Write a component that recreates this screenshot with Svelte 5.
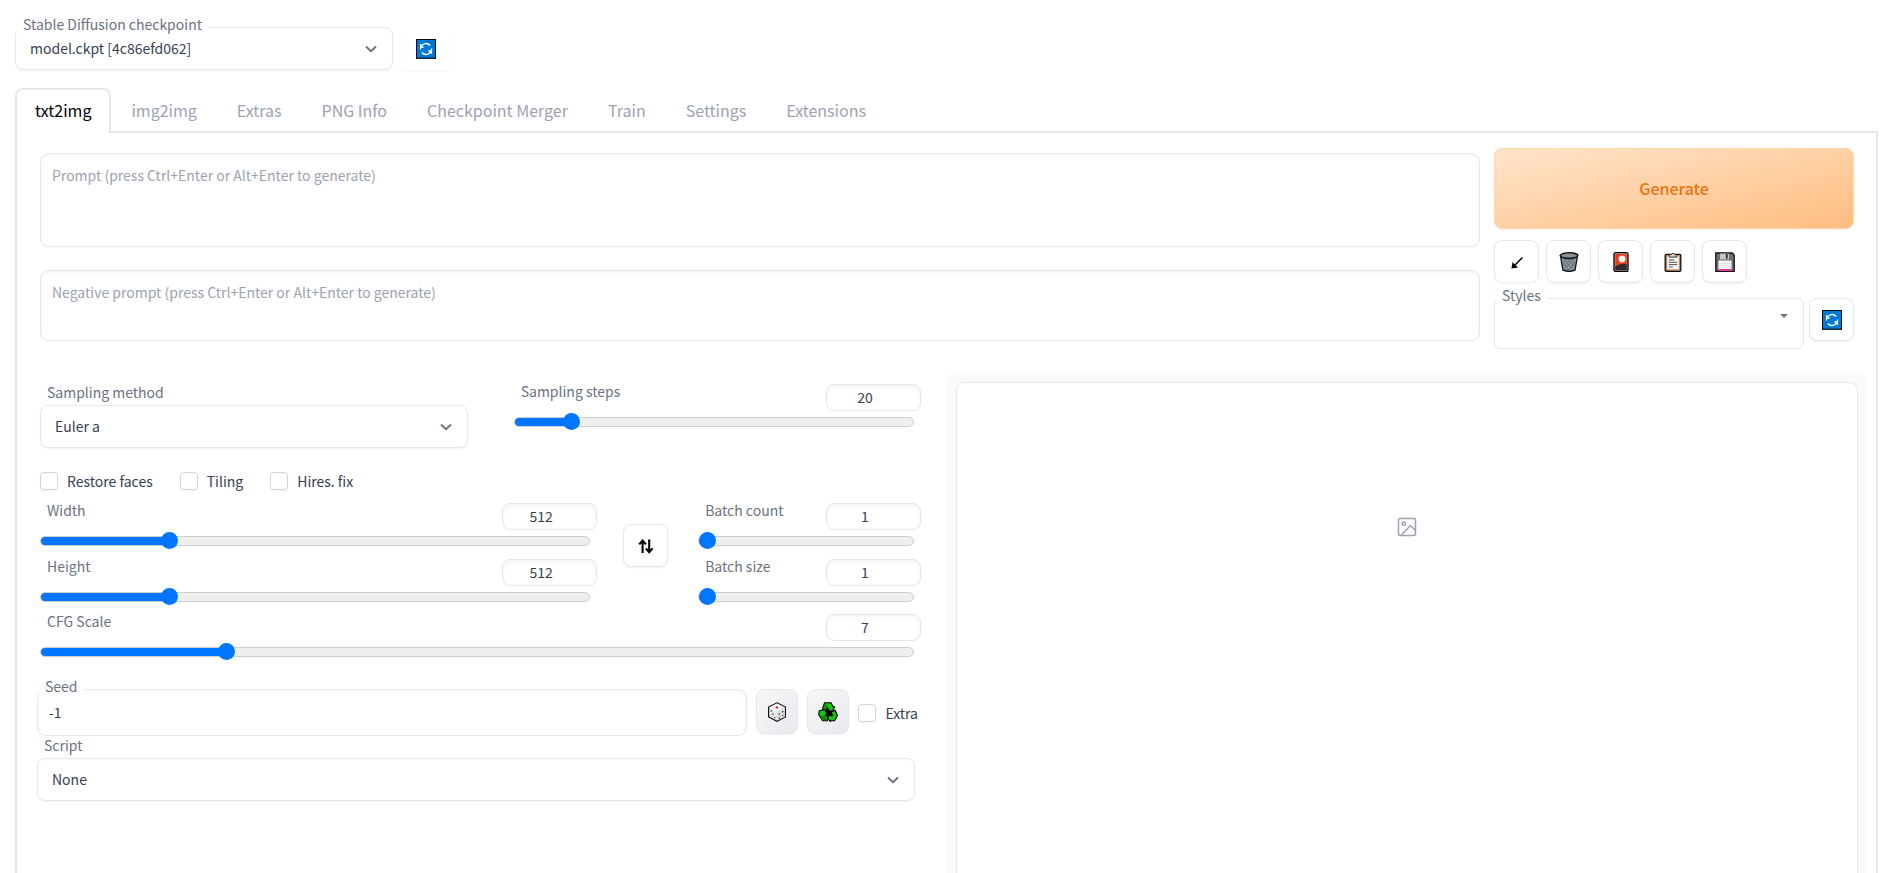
<script lang="ts">
	const tabs = [
		'txt2img',
		'img2img',
		'Extras',
		'PNG Info',
		'Checkpoint Merger',
		'Train',
		'Settings',
		'Extensions'
	];

	const tools = [
		{ icon: 'arrow', title: 'Read generation parameters' },
		{ icon: 'trash', title: 'Clear prompt' },
		{ icon: 'card', title: 'Show extra networks' },
		{ icon: 'clipboard', title: 'Apply selected styles' },
		{ icon: 'floppy', title: 'Save style' }
	];

	let activeTab = $state('txt2img');

	let sliders = $state({
		steps: { label: 'Sampling steps', min: 1, max: 150, value: 20 },
		width: { label: 'Width', min: 64, max: 2048, value: 512 },
		height: { label: 'Height', min: 64, max: 2048, value: 512 },
		count: { label: 'Batch count', min: 1, max: 100, value: 1 },
		size: { label: 'Batch size', min: 1, max: 8, value: 1 },
		cfg: { label: 'CFG Scale', min: 1, max: 30, value: 7 }
	});

	function percent(s: { min: number; max: number; value: number }) {
		return ((s.value - s.min) / (s.max - s.min)) * 100;
	}

	function swapSize() {
		const w = sliders.width.value;
		sliders.width.value = sliders.height.value;
		sliders.height.value = w;
	}
</script>

{#snippet chevron()}
	<svg class="chevron" width="14" height="14" viewBox="0 0 14 14" aria-hidden="true">
		<path d="M2 4.5 7 9.3 12 4.5" fill="none" stroke="#6b7280" stroke-width="1.9" />
	</svg>
{/snippet}

{#snippet icon(name)}
	<svg class="icon" width="20" height="20" viewBox="0 0 20 20" aria-hidden="true">
		{#if name === 'refresh'}
			<rect x="0.5" y="0.5" width="19" height="19" fill="#0078d7" stroke="#0b0b0b" />
			<path d="M1 19.2h18" stroke="#1d2f40" stroke-width="1.4" />
			<g fill="none" stroke="#fff" stroke-width="1.3">
				<path d="M4.4 10.4a5.6 5.6 0 0 1 9.8-3.9M15.6 9.6a5.6 5.6 0 0 1-9.800 3.900" />
				<path d="M4.600 5v3h3M15.400 15v-3h-3" />
			</g>
		{:else if name === 'arrow'}
			<path d="M15.500 5.500 6.200 14.800" stroke="#000" stroke-width="1.5" />
			<path d="M4.400 16.500 5.600 10 7.400 12 9 13.600 11 15.400z" fill="#000" />
		{:else if name === 'trash'}
			<path d="M1.5 4 4 18.2q6 2.4 12 0L18.5 4z" fill="#8a979e" stroke="#111" stroke-width="1.3" />
			<path
				d="m4 6 11 12M7.5 6l8.5 9M11 6l6 6M4.5 11l6 8M16 6 5 17.5M12.5 6 4.5 14M9 6 4 11M17 10l-8 9"
				stroke="#566268"
				stroke-width="0.7"
			/>
			<ellipse cx="10" cy="3.6" rx="8.9" ry="2.9" fill="#6f7d84" stroke="#111" stroke-width="1.3" />
			<ellipse cx="10" cy="3.6" rx="6.7" ry="1.4" fill="#89969c" />
		{:else if name === 'card'}
			<rect x="3" y="0.7" width="14" height="18.8" rx="1.5" fill="#b8b8b8" stroke="#000" stroke-width="1.3" />
			<rect x="4.3" y="2" width="11.4" height="16.2" fill="#f03a17" />
			<path d="M4.3 14.5q5-3.7 11.4-2.4v6.1H4.3z" fill="#2a2a2a" />
			<circle cx="11" cy="7" r="3.4" fill="#f5f5f5" />
		{:else if name === 'clipboard'}
			<rect x="2.2" y="2.3" width="15.6" height="17" rx="1" fill="#c98a57" stroke="#111" stroke-width="1.3" />
			<rect x="4.2" y="4.2" width="11.6" height="13.2" fill="#f4f4f4" />
			<path d="M6.2 2.5h2.3a1.6 1.6 0 0 1 3 0h2.3v2.6H6.2z" fill="#d5d5d5" stroke="#222" stroke-width="0.9" />
			<path d="M5.8 8h5.5M5.8 10.3h8.4M5.8 12.6h8.4M5.8 14.9h4" stroke="#555" stroke-width="1" />
		{:else if name === 'floppy'}
			<path d="M.8 1h16.4l2 2v16.3H.8z" fill="#707070" stroke="#111" stroke-width="1.3" />
			<rect x="5" y="1.6" width="9" height="5.8" fill="#c9c9c9" />
			<rect x="10.8" y="2" width="1.9" height="4.6" fill="#333" />
			<rect x="3.5" y="8.5" width="13" height="10.2" fill="#f4f4f4" />
			<path d="M3.5 11.5h13M3.5 14h13" stroke="#dadada" stroke-width="0.8" />
			<rect x="3.5" y="17.2" width="13" height="1.5" fill="#e3008c" />
		{:else if name === 'swap'}
			<g fill="none" stroke="#000" stroke-width="2.1">
				<path d="M6.6 17V5M3.2 8.4 6.6 4.6 10 8.4M13.2 3.6v12M9.8 12.4l3.4 3.8 3.4-3.8" />
			</g>
		{:else if name === 'dice'}
			<path d="M10 .8 18.4 5v10L10 19.3 1.6 15V5z" fill="#e8e8ea" stroke="#111" stroke-width="1.2" />
			<path d="M10 1.6 17.6 5.4 10 9.4 2.4 5.4z" fill="#fafafa" />
			<path d="M10 9.4v9.2l7.6-3.9V5.4z" fill="#dcdce0" />
			<ellipse cx="10" cy="5.6" rx="1.5" ry="1" fill="#d6112a" />
			<g fill="#222">
				<circle cx="4.3" cy="9" r="0.7" />
				<circle cx="6" cy="12" r="0.7" />
				<circle cx="7.8" cy="15.6" r="0.7" />
				<circle cx="12.2" cy="12" r="0.7" />
				<circle cx="15.8" cy="9.8" r="0.7" />
				<circle cx="12.4" cy="16" r="0.7" />
				<circle cx="15.8" cy="13.6" r="0.7" />
			</g>
		{:else if name === 'recycle'}
			<path d="M6 5h8l3.500 8-4 5H6l-4-5z" fill="#000" />
			<g fill="#16c60c" stroke="#000" stroke-width="1.1" stroke-linejoin="round">
				<path d="M6.600.8h6.400l2 3.800 1.600.2-2 4.600-5-.8 1-1.200-1.200-1.600L7.600 9 4.400 7z" />
				<path d="M1.200 8.800 7 7.600 9.400 12.800 7.800 12.600l-.4 1.200h2.200v5H4.600L.7 12.800z" />
				<path d="m13 10.200 4.200-2 2.200 5.200-2.800 5.400h-4v1L9.400 16l3.200-4 .2 1.600h2z" />
			</g>
			<path d="M5.400 6.800 8 1.400 9.600 4.800 7.400 8.200zM4.800 18.200 2.200 13.800h4.800l2 .6v3.800z" fill="#0b8a08" />
		{/if}
	</svg>
{/snippet}

{#snippet slider(key)}
	<div class="slider">
		<div class="slider-head">
			<label for="{key}-range">{sliders[key].label}</label>
			<input
				class="number"
				type="number"
				aria-label="{sliders[key].label} value"
				bind:value={sliders[key].value}
			/>
		</div>
		<input
			id="{key}-range"
			class="range"
			type="range"
			min={sliders[key].min}
			max={sliders[key].max}
			bind:value={sliders[key].value}
			style="--fill: {percent(sliders[key])}%"
		/>
	</div>
{/snippet}

{#snippet checkbox(label)}
	<label class="check"><input type="checkbox" />{label}</label>
{/snippet}

<div class="app">
	<header class="quicksettings">
		<div class="field checkpoint">
			<label class="floating" for="checkpoint">Stable Diffusion checkpoint</label>
			<div class="select">
				<select id="checkpoint"><option>model.ckpt [4c86efd062]</option></select>
				{@render chevron()}
			</div>
		</div>
		<button class="tool bare" title="Refresh checkpoints">{@render icon('refresh')}</button>
	</header>

	<div class="tabs" role="tablist">
		{#each tabs as tab}
			<button
				role="tab"
				class:selected={activeTab === tab}
				aria-selected={activeTab === tab}
				onclick={() => (activeTab = tab)}>{tab}</button
			>
		{/each}
	</div>

	<main class="panel">
		<section class="toprow">
			<div class="prompts">
				<textarea
					class="prompt"
					aria-label="Prompt"
					placeholder="Prompt (press Ctrl+Enter or Alt+Enter to generate)"
				></textarea>
				<textarea
					class="prompt negative"
					aria-label="Negative prompt"
					placeholder="Negative prompt (press Ctrl+Enter or Alt+Enter to generate)"
				></textarea>
			</div>
			<div class="actions">
				<button class="generate">Generate</button>
				<div class="tools">
					{#each tools as tool}
						<button class="tool" title={tool.title}>{@render icon(tool.icon)}</button>
					{/each}
				</div>
				<div class="styles">
					<div class="field">
						<label class="floating" for="styles">Styles</label>
						<div class="select multi">
							<select id="styles"><option></option></select>
							<svg class="caret" width="8" height="4" viewBox="0 0 8 4" aria-hidden="true">
								<path d="M0 0h8L4 4z" fill="#6b7280" />
							</svg>
						</div>
					</div>
					<button class="tool" title="Refresh styles">{@render icon('refresh')}</button>
				</div>
			</div>
		</section>

		<div class="columns">
			<section class="settings">
				<div class="sampler">
					<div class="method">
						<label for="method">Sampling method</label>
						<div class="select">
							<select id="method"><option>Euler a</option></select>
							{@render chevron()}
						</div>
					</div>
					{@render slider('steps')}
				</div>

				<div class="checks">
					{@render checkbox('Restore faces')}
					{@render checkbox('Tiling')}
					{@render checkbox('Hires. fix')}
				</div>

				<div class="dimensions">
					<div class="stack">
						{@render slider('width')}
						{@render slider('height')}
					</div>
					<button class="tool" title="Switch width and height" onclick={swapSize}>
						{@render icon('swap')}
					</button>
					<div class="stack">
						{@render slider('count')}
						{@render slider('size')}
					</div>
				</div>
				{@render slider('cfg')}

				<div class="seed">
					<div class="field">
						<label class="floating" for="seed">Seed</label>
						<input id="seed" type="text" value="-1" />
					</div>
					<button class="tool filled" title="Random seed">{@render icon('dice')}</button>
					<button class="tool filled" title="Reuse seed">{@render icon('recycle')}</button>
					{@render checkbox('Extra')}
				</div>

				<div class="script">
					<label for="script">Script</label>
					<div class="select">
						<select id="script"><option>None</option></select>
						{@render chevron()}
					</div>
				</div>
			</section>

			<section class="results">
				<div class="gallery">
					<svg width="20" height="20" viewBox="0 0 20 20" aria-label="No images yet">
						<g fill="none" stroke="#9ca3af" stroke-width="1.5">
							<rect x="1.5" y="1.5" width="17" height="17" rx="1.5" />
							<circle cx="6.8" cy="6.8" r="1.7" />
							<path d="M4 18.5 13.5 8.5l5 5" />
						</g>
					</svg>
				</div>
			</section>
		</div>
	</main>
</div>

<style>
	:global(body) {
		margin: 0;
		background: #fff;
		overflow-x: hidden;
	}

	:global(html) {
		scrollbar-width: none;
	}

	.app {
		box-sizing: border-box;
		padding: 27px 9px 0 15px;
		color: #374151;
		font-family: 'Noto Sans CJK SC', 'Noto Sans', sans-serif;
		font-size: 14px;
		line-height: 20px;
	}

	.app :global(*) {
		box-sizing: border-box;
	}

	button,
	input,
	select,
	textarea {
		margin: 0;
		font: inherit;
		color: inherit;
	}

	label {
		color: #6b7280;
	}

	/* header */
	.quicksettings {
		display: flex;
		gap: 10px;
	}

	.checkpoint {
		width: 378px;
	}

	.field {
		position: relative;
	}

	.floating {
		position: absolute;
		z-index: 1;
		top: -13px;
		left: 4px;
		padding: 0 4px;
		background: #fff;
		box-shadow: 0 0 4px 2px #fff;
	}

	/* drop-downs */
	.select {
		display: grid;
		align-items: center;
	}

	.select > :global(*) {
		grid-area: 1 / 1;
	}

	select {
		appearance: none;
		width: 100%;
		height: 43px;
		padding: 0 40px 2px 14px;
		border: 1px solid #e5e7eb;
		border-radius: 8px;
		background: #fff;
		box-shadow: 0 1px 2px rgba(0, 0, 0, 0.05);
	}

	.chevron {
		justify-self: end;
		margin-right: 15px;
		pointer-events: none;
	}

	.multi select {
		height: 51px;
		border-radius: 6px;
		box-shadow: none;
	}

	.caret {
		align-self: start;
		justify-self: end;
		margin: 16px 16px 0 0;
		pointer-events: none;
	}

	/* square icon buttons */
	.tool {
		display: flex;
		flex: none;
		align-items: center;
		justify-content: center;
		width: 45px;
		height: 43px;
		padding: 0;
		border: 1px solid #e5e7eb;
		border-radius: 8px;
		background: #fff;
		box-shadow: 0 1px 2px rgba(0, 0, 0, 0.05);
	}

	.tool.bare {
		width: 46px;
		border-color: transparent;
		border-radius: 0;
	}

	.tool.filled {
		width: 42px;
		height: 45px;
		background: linear-gradient(to bottom right, #f6f7f8, #e9eaee);
	}

	/* tabs */
	.tabs {
		display: flex;
		margin-top: 18px;
		box-shadow: inset 0 -2px #e5e7eb;
	}

	.tabs button {
		height: 45px;
		padding: 0 18px 4px;
		border: 2px solid transparent;
		border-bottom: 0;
		background: none;
		color: #9ca3af;
		font-size: 16px;
		white-space: nowrap;
	}

	.tabs button.selected {
		border-color: #e5e7eb;
		border-radius: 8px 8px 0 0;
		background: #fff;
		color: #000;
	}

	.panel {
		min-height: calc(100vh - 133px);
		padding: 15px 9px 0 10px;
		border: 2px solid #e5e7eb;
		border-top: 0;
	}

	/* prompts and generate */
	.toprow {
		display: flex;
		gap: 14px;
		padding: 0 13px;
	}

	.prompts {
		display: flex;
		flex: 4;
		flex-direction: column;
		gap: 23px;
		padding-top: 5px;
	}

	.prompt {
		width: 100%;
		height: 94px;
		padding: 11px;
		border: 1px solid #e5e7eb;
		border-radius: 8px;
		box-shadow: inset 0 2px 4px rgba(0, 0, 0, 0.05);
		resize: none;
	}

	.prompt.negative {
		height: 71px;
	}

	.prompt::placeholder {
		color: #9ca3af;
	}

	.actions {
		display: flex;
		flex: 1;
		flex-direction: column;
	}

	.generate {
		height: 81px;
		padding-bottom: 2px;
		border: 1px solid #fed7aa;
		border-radius: 8px;
		background: linear-gradient(to bottom right, #ffe4cb, #ffbd80);
		box-shadow: 0 1px 2px rgba(0, 0, 0, 0.05);
		color: #ee7411;
		font-size: 16px;
		font-weight: 500;
	}

	.tools {
		display: flex;
		gap: 7px;
		margin-top: 11px;
	}

	.styles {
		display: flex;
		gap: 5px;
		margin-top: 15px;
	}

	.styles .field {
		flex: 1;
	}

	/* generation settings */
	.columns {
		display: grid;
		grid-template-columns: 1fr 1fr;
		margin-top: 24px;
	}

	.settings {
		padding: 11px 26px 0 13px;
	}

	.sampler {
		display: grid;
		grid-template-columns: 21fr 20fr;
		gap: 46px;
	}

	.method label,
	.script label {
		display: block;
		margin-bottom: 5px;
		padding: 0 7px;
		line-height: 16px;
	}

	.slider-head {
		display: flex;
		justify-content: space-between;
		padding-left: 7px;
	}

	.slider-head label {
		line-height: 15px;
	}

	.number {
		appearance: textfield;
		width: 95px;
		height: 27px;
		padding: 0 17px 2px 0;
		border: 1px solid #e5e7eb;
		border-radius: 8px;
		box-shadow: inset 0 2px 4px rgba(0, 0, 0, 0.05);
		text-align: center;
	}

	.number::-webkit-inner-spin-button {
		appearance: none;
	}

	.range {
		appearance: none;
		display: block;
		width: calc(100% - 7px);
		height: 18px;
		margin-top: 2px;
		background: none;
	}

	.range::-webkit-slider-runnable-track {
		height: 10px;
		border: 1px solid #cdcdcd;
		border-radius: 5px;
		background: linear-gradient(#0075ff, #0075ff) 0 0 / var(--fill) 100% no-repeat border-box #efefef;
	}

	.range::-webkit-slider-thumb {
		appearance: none;
		width: 17px;
		height: 17px;
		margin-top: -5px;
		border-radius: 50%;
		background: #0075ff;
	}

	.checks {
		display: flex;
		gap: 27px;
		margin: 23px 0 12px;
	}

	.check {
		display: flex;
		align-items: center;
		gap: 9px;
		color: #374151;
		white-space: nowrap;
	}

	.check input {
		appearance: none;
		width: 18px;
		height: 18px;
		border: 1px solid #d1d5db;
		border-radius: 4px;
		background: #fff;
		box-shadow: 0 1px 2px rgba(0, 0, 0, 0.05);
	}

	.dimensions {
		display: grid;
		grid-template-columns: 5fr 49px 2fr;
		align-items: start;
		column-gap: 26px;
		margin-bottom: 8px;
	}

	.dimensions .tool {
		margin-top: 21px;
	}

	.stack {
		display: flex;
		flex-direction: column;
		gap: 9px;
	}

	.seed {
		display: flex;
		gap: 9px;
		margin: 28px 3px 0 -3px;
	}

	.seed .field {
		flex: 1;
	}

	.seed .check {
		height: 47px;
	}

	#seed {
		width: 100%;
		height: 47px;
		padding: 0 11px 2px;
		border: 1px solid #e5e7eb;
		border-radius: 8px;
		box-shadow: inset 0 2px 4px rgba(0, 0, 0, 0.05);
	}

	.script {
		margin: 0 6px 0 -3px;
	}

	.script label {
		padding-top: 1px;
	}

	/* output */
	.results {
		padding: 9px 9px 9px 9px;
		border-radius: 8px;
		background: #f9fafb;
	}

	.gallery {
		display: flex;
		justify-content: center;
		min-height: 560px;
		padding-top: 134px;
		border: 1px solid #e5e7eb;
		border-radius: 8px;
		background: #fff;
	}
</style>
